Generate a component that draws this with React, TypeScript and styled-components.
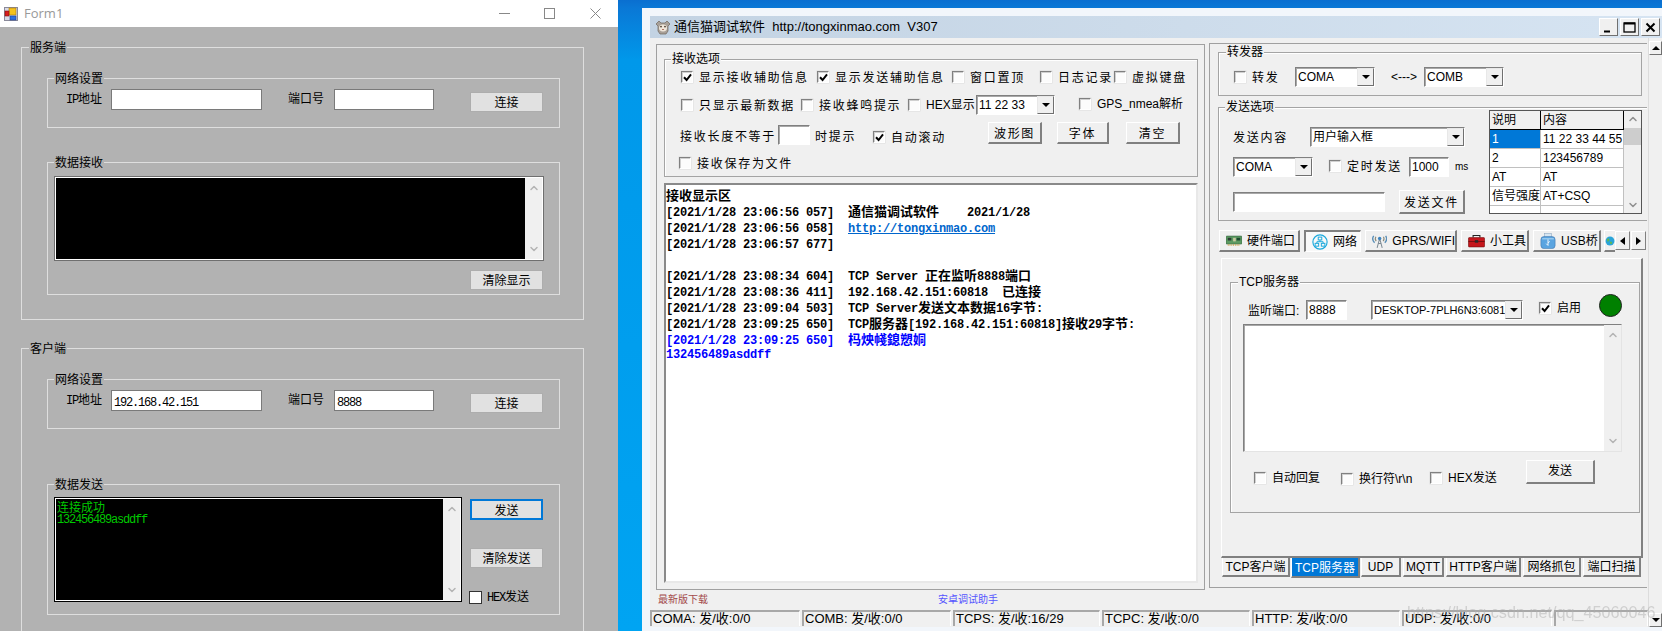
import React from "react"
import styled, { createGlobalStyle, css } from "styled-components"
import { ChevronUp, ChevronDown } from "lucide-react"

const GlobalStyle = createGlobalStyle`
  html, body { margin: 0; padding: 0; background: #0a86dc; }
  * { box-sizing: border-box; }
`

const SANS = `"Liberation Sans", "Noto Sans CJK SC", sans-serif`
const SONG = `"Noto Sans CJK SC", "Liberation Sans", sans-serif`

const Desktop = styled.div`
  position: relative;
  display: flex;
  width: 1662px;
  height: 631px;
  overflow: hidden;
  background: linear-gradient(180deg, #0a6fd0 0, #0a78d6 8px, #0098ea 60px, #00a4f2 100%);
`

/* ---------- left window (WinForms) ---------- */

const FormWindow = styled.div`
  flex: none;
  display: flex;
  flex-direction: column;
  width: 618px;
  height: 631px;
  font: 12px/16px ${SONG};
  color: #000;
`

const FormTitle = styled.div`
  flex: none;
  display: flex;
  align-items: center;
  height: 27px;
  padding-left: 4px;
  background: #fff;
  color: #999;
  font: 13px/27px "Open Sans", sans-serif;
`

const FormTitleText = styled.span`
  margin-left: 6px;
  flex: 1;
`

const CaptionButton = styled.div`
  display: flex;
  align-items: center;
  justify-content: center;
  width: 45.5px;
  height: 27px;
`

const FormBody = styled.div`
  flex: 1;
  display: flex;
  flex-direction: column;
  gap: 28px;
  padding: 20px 0 0 21px;
  overflow: hidden;
  background: #b2b2b2;
`

const Group = styled.div<{ $w?: number; $h: number; $mt?: number; $form?: boolean; $open?: boolean }>`
  position: relative;
  flex: none;
  width: ${(p) => (p.$w ? `${p.$w}px` : "auto")};
  height: ${(p) => p.$h}px;
  margin-top: ${(p) => p.$mt ?? 0}px;
  border: 1px solid ${(p) => (p.$form ? "#dedede" : "#a4a4a4")};
  ${(p) => p.$open && "border-right: none;"}
  ${(p) =>
    !p.$form &&
    css`
      box-shadow: inset 1px 1px 0 #fff;
    `}
`

const Legend = styled.span<{ $left: number; $form?: boolean }>`
  position: absolute;
  top: -9px;
  left: ${(p) => p.$left}px;
  padding: 0 1px;
  background: ${(p) => (p.$form ? "#b2b2b2" : "#f0f0f0")};
  font-size: 12px;
  line-height: 16px;
  white-space: nowrap;
`

const OuterStack = styled.div<{ $gap: number; $top: number }>`
  display: flex;
  flex-direction: column;
  gap: ${(p) => p.$gap}px;
  padding: ${(p) => p.$top}px 23px 0 25px;
`

const FormRow = styled.div`
  display: flex;
  align-items: flex-start;
  padding: 10px 0 0 18px;
`

const FormLabel = styled.span<{ $w: number; $ml?: number }>`
  width: ${(p) => p.$w}px;
  margin-left: ${(p) => p.$ml ?? 0}px;
  line-height: 18px;
  white-space: nowrap;
`

const FormInput = styled.div<{ $w: number }>`
  width: ${(p) => p.$w}px;
  height: 21px;
  padding: 2px 2px;
  border: 1px solid #7a7a7a;
  background: #fff;
  line-height: 16px;
`

const FormButton = styled.div<{ $focus?: boolean; $h?: number }>`
  flex: none;
  width: 73px;
  height: ${(p) => p.$h ?? 20}px;
  border: ${(p) => (p.$focus ? "2px solid #0078d7" : "1px solid #adadad")};
  background: #e1e1e1;
  text-align: center;
  line-height: ${(p) => (p.$h ?? 20) - (p.$focus ? 4 : 2)}px;
`

const ConnectSlot = styled.div`
  margin: 3px 0 0 36px;
`

const Console = styled.div<{ $w: number; $h: number; $dark?: boolean }>`
  display: flex;
  width: ${(p) => p.$w}px;
  height: ${(p) => p.$h}px;
  padding: 1px;
  border: 1px solid ${(p) => (p.$dark ? "#000" : "#6f6f6f")};
  background: #fff;
`

const ConsoleScreen = styled.div`
  flex: 1;
  padding: 2px 1px;
  background: #000;
  color: #00c800;
`

const ConsoleLine = styled.div`
  height: 11px;
  line-height: 11px;
  white-space: nowrap;
`

const ScrollTrack = styled.div<{ $w?: number; $white?: boolean }>`
  flex: none;
  display: flex;
  flex-direction: column;
  justify-content: space-between;
  align-items: center;
  width: ${(p) => p.$w ?? 17}px;
  padding: 4px 0;
  background: #f0f0f0;
  color: #b4b4b4;
`

const RecvBody = styled.div`
  padding: 13px 0 0 6px;
`

const ClearSlot = styled.div`
  margin: 9px 0 0 416px;
`

const SendBody = styled.div`
  display: flex;
  gap: 8px;
  padding: 12px 0 0 6px;
`

const SendColumn = styled.div`
  display: flex;
  flex-direction: column;
  padding-top: 2px;
`

const SendSpacer = styled.div<{ $h: number }>`
  height: ${(p) => p.$h}px;
`

const HexCheck = styled.div`
  display: flex;
  align-items: center;
  gap: 5px;
  margin-left: -1px;
`

const HexBox = styled.span`
  width: 13px;
  height: 13px;
  border: 1px solid #333;
  background: #fff;
`

const Ascii = styled.span`
  font-family: "Liberation Mono", monospace;
  font-size: 12px;
  letter-spacing: -1.2px;
`

const splitAscii = (s: string) => s.split(/([\x00-\x7f]+)/).filter(Boolean)

const Song = ({ text }: { text: string }) => (
  <>
    {splitAscii(text).map((part, i) =>
      /^[\x00-\x7f]/.test(part) ? <Ascii key={i}>{part}</Ascii> : <span key={i}>{part}</span>,
    )}
  </>
)

/* ---------- right window (tongxinmao) ---------- */

const ToolWindow = styled.div`
  flex: none;
  display: flex;
  flex-direction: column;
  width: 1020px;
  height: 623px;
  margin: 8px 0 0 24px;
  padding: 8px 0 4px 8px;
  background: #f2f6fb;
  font: 12px/16px ${SANS};
  color: #000;
`

const ToolTitle = styled.div`
  flex: none;
  display: flex;
  align-items: center;
  height: 22px;
  padding: 0 2px 0 5px;
  background: linear-gradient(90deg, #c3d3e3, #d6e4f2);
  font-size: 13px;
`

const ToolTitleText = styled.span`
  flex: 1;
  margin-left: 3px;
  white-space: pre;
`

const TitleButtons = styled.div`
  display: flex;
  gap: 2px;
`

const TitleButton = styled.div`
  display: flex;
  align-items: center;
  justify-content: center;
  width: 19px;
  height: 18px;
  background: #f0f0f0;
  border: 1px solid;
  border-color: #fff #707070 #707070 #fff;
`

const ToolClient = styled.div`
  flex: 1;
  display: flex;
  min-height: 0;
  background: #f0f0f0;
`

const ToolColumn = styled.div`
  flex: 1;
  display: flex;
  flex-direction: column;
  padding-top: 5px;
  min-width: 0;
`

const PanelRow = styled.div`
  flex: none;
  display: flex;
  align-items: flex-start;
  gap: 4px;
  height: 547px;
  padding-left: 6px;
`

const LeftPanel = styled.div`
  flex: none;
  width: 549px;
  height: 546px;
  margin-top: 1px;
  padding: 14px 0 0 7px;
  border: 1px solid #a0a0a0;
`

const RightPanel = styled.div`
  flex: none;
  width: 438px;
  height: 545px;
  padding: 8px 0 0 8px;
  border: 1px solid #a0a0a0;
  border-right: none;
  overflow: hidden;
`

const OptionRow = styled.div<{ $pl: number; $mt: number; $h: number; $end?: boolean }>`
  display: flex;
  align-items: ${(p) => (p.$end ? "flex-end" : "center")};
  height: ${(p) => p.$h}px;
  margin-top: ${(p) => p.$mt}px;
  padding-left: ${(p) => p.$pl}px;
  white-space: nowrap;
`

const CheckWrap = styled.label<{ $w?: number }>`
  flex: none;
  display: inline-flex;
  align-items: center;
  gap: 6px;
  width: ${(p) => (p.$w ? `${p.$w}px` : "auto")};
  white-space: nowrap;
`

const CheckBox = styled.span`
  flex: none;
  display: flex;
  align-items: center;
  justify-content: center;
  width: 12px;
  height: 12px;
  border: 1px solid;
  border-color: #808080 #fff #fff #808080;
  box-shadow: inset 1px 1px 0 #d0d0d0, 0 0 0 0.5px #dcdcdc;
  background: #fcfcfc;
`

const Spaced = styled.span`
  letter-spacing: 1.72px;
  font-family: ${SONG};
`

const PlainText = styled.span<{ $w?: number; $ml?: number }>`
  flex: none;
  width: ${(p) => (p.$w ? `${p.$w}px` : "auto")};
  margin-left: ${(p) => p.$ml ?? 0}px;
`

const Unit = styled.span`
  flex: none;
  margin-left: 6px;
  font-size: 10px;
`

const Sunken = styled.div<{ $w: number; $h?: number; $ml?: number }>`
  flex: none;
  display: flex;
  align-items: center;
  width: ${(p) => p.$w}px;
  height: ${(p) => p.$h ?? 20}px;
  margin-left: ${(p) => p.$ml ?? 0}px;
  padding-left: 2px;
  border: 1px solid;
  border-color: #808080 #fff #fff #808080;
  box-shadow: inset 1px 1px 0 #a8a8a8;
  background: #fff;
  overflow: hidden;
  white-space: nowrap;
`

const ComboText = styled.span<{ $small?: boolean }>`
  flex: 1;
  overflow: hidden;
  font-size: ${(p) => (p.$small ? 11 : 12)}px;
`

const ComboArrow = styled.span`
  flex: none;
  display: flex;
  align-items: center;
  justify-content: center;
  width: 17px;
  height: 100%;
  background: #f0f0f0;
  border: 1px solid;
  border-color: #e8e8e8 #707070 #707070 #e8e8e8;
  &::after {
    content: "";
    border-style: solid;
    border-width: 4px 4px 0;
    border-color: #000 transparent transparent;
  }
`

const BevelButton = styled.div<{ $w: number; $h: number; $ml?: number; $top?: boolean }>`
  flex: none;
  ${(p) => p.$top && "align-self: flex-start;"}
  width: ${(p) => p.$w}px;
  height: ${(p) => p.$h}px;
  margin-left: ${(p) => p.$ml ?? 0}px;
  border-style: solid;
  border-width: 1px 2px 2px 1px;
  border-color: #fff #808080 #808080 #fff;
  background: #f0f0f0;
  text-align: center;
  line-height: ${(p) => p.$h - 3}px;
`

const LogBox = styled.div`
  width: 534px;
  height: 400px;
  margin-top: 6px;
  padding: 2px 0 0 0;
  border: 2px solid;
  border-color: #8a8a8a #e8e8e8 #e8e8e8 #8a8a8a;
  background: #fff;
  font: bold 13px/16px ${SONG};
`

const LogLine = styled.div<{ $tone?: "blue" }>`
  display: flex;
  height: 16px;
  color: ${(p) => (p.$tone === "blue" ? "#0000ff" : "#000")};
  white-space: pre;
`

const LogStamp = styled.span`
  flex: none;
  width: 182px;
`

const LogAscii = styled.span`
  font-family: "Liberation Mono", monospace;
  font-size: 12px;
  letter-spacing: -0.2px;
`

const LogLink = styled.span`
  color: #0066cc;
  text-decoration: underline;
`

const MixedLog = ({ text }: { text: string }) => (
  <>
    {splitAscii(text).map((part, i) =>
      /^[\x00-\x7f]/.test(part) ? <LogAscii key={i}>{part}</LogAscii> : <span key={i}>{part}</span>,
    )}
  </>
)

const SendOptions = styled.div`
  display: flex;
  padding: 2px 0 0 14px;
`

const SendLeft = styled.div`
  flex: none;
  width: 256px;
  padding-top: 17px;
`

const SendLine = styled.div<{ $mt?: number }>`
  display: flex;
  align-items: center;
  margin-top: ${(p) => p.$mt ?? 0}px;
`

const PresetTable = styled.div`
  flex: none;
  display: flex;
  width: 153px;
  height: 104px;
  border: 1px solid #555;
  background: #fff;
  overflow: hidden;
`

const PresetGrid = styled.div`
  flex: 1;
  display: grid;
  grid-template-columns: 51px 83px;
  grid-auto-rows: 19px;
  align-content: start;
`

const PresetCell = styled.div<{ $head?: boolean; $on?: boolean }>`
  padding: 1px 0 0 2px;
  white-space: nowrap;
  overflow: hidden;
  line-height: 17px;
  border-right: 1px solid ${(p) => (p.$head ? "#000" : "#c0c0c0")};
  border-bottom: 1px solid ${(p) => (p.$head ? "#000" : "#c0c0c0")};
  background: ${(p) => (p.$on ? "#0078d7" : p.$head ? "#f0f0f0" : "#fff")};
  color: ${(p) => (p.$on ? "#fff" : "#000")};
`

const PresetScroll = styled.div`
  position: relative;
  flex: none;
  display: flex;
  flex-direction: column;
  justify-content: space-between;
  align-items: center;
  width: 17px;
  padding: 2px 0;
  background: #f0f0f0;
  color: #909090;
`

const PresetThumb = styled.div`
  position: absolute;
  top: 17px;
  left: 0;
  width: 17px;
  height: 17px;
  background: #cdcdcd;
`

const TabStrip = styled.div`
  display: flex;
  gap: 4px;
  height: 22px;
  margin: 9px 0 0 1px;
`

const IconTab = styled.div<{ $w: number; $on?: boolean }>`
  flex: none;
  display: flex;
  align-items: center;
  gap: 5px;
  width: ${(p) => p.$w}px;
  height: 22px;
  padding-left: 6px;
  border-style: solid;
  border-width: ${(p) => (p.$on ? "2px 1px 1px 2px" : "1px 2px 2px 1px")};
  border-color: ${(p) =>
    p.$on ? "#808080 #fff #fff #808080" : "#fff #808080 #808080 #fff"};
  background: ${(p) => (p.$on ? "#f8f8f8" : "#f0f0f0")};
  white-space: nowrap;
  overflow: hidden;
`

const TabCut = styled.div`
  flex: none;
  display: flex;
  align-items: center;
  width: 11px;
  height: 22px;
  margin-left: -1px;
  overflow: hidden;
  border-top: 1px solid #fff;
  border-left: 1px solid #fff;
  border-bottom: 2px solid #808080;
`

const TabArrows = styled.div`
  flex: none;
  display: flex;
  gap: 1px;
  margin-left: -4px;
`

const TabArrow = styled.div<{ $dir: "left" | "right" }>`
  display: flex;
  align-items: center;
  justify-content: center;
  width: 15px;
  height: 19px;
  margin-top: 1px;
  border: 1px solid;
  border-color: #fff #808080 #808080 #fff;
  background: #f0f0f0;
  &::after {
    content: "";
    border-style: solid;
    border-width: ${(p) => (p.$dir === "left" ? "4px 5px 4px 0" : "4px 0 4px 5px")};
    border-color: ${(p) =>
      p.$dir === "left"
        ? "transparent #000 transparent transparent"
        : "transparent transparent transparent #000"};
  }
`

const TabPage = styled.div`
  width: 422px;
  height: 300px;
  margin: 6px 0 0 3px;
  padding: 23px 0 0 8px;
  border-style: solid;
  border-width: 1px 2px 2px 1px;
  border-color: #fff #808080 #808080 #fff;
`

const ServerTop = styled.div`
  display: flex;
  align-items: flex-start;
  height: 20px;
  margin-top: 17px;
  padding-left: 17px;
`

const TopLabel = styled.span`
  flex: none;
  width: 58px;
  line-height: 22px;
`

const Led = styled.span`
  flex: none;
  width: 23px;
  height: 23px;
  margin-top: -6px;
  border: 1px solid #222;
  border-radius: 50%;
  background: #008000;
`

const ServerLog = styled.div`
  display: flex;
  justify-content: flex-end;
  width: 379px;
  height: 128px;
  margin: 4px 0 0 12px;
  border: 1px solid;
  border-color: #808080 #e4e4e4 #e4e4e4 #808080;
  box-shadow: inset 1px 1px 0 #a8a8a8;
  background: #fff;
`

const ServerActions = styled.div`
  display: flex;
  align-items: flex-start;
  margin-top: 8px;
  padding-left: 23px;
`

const CheckDrop = styled.div<{ $top: number }>`
  padding-top: ${(p) => p.$top}px;
`

const BottomTabs = styled.div`
  display: flex;
  align-items: flex-start;
  margin-left: 4px;
  gap: 1px;
`

const BottomTab = styled.div<{ $w: number; $ml?: number; $on?: boolean }>`
  flex: none;
  width: ${(p) => p.$w}px;
  height: ${(p) => (p.$on ? 20 : 19)}px;
  margin-left: ${(p) => p.$ml ?? 0}px;
  border-style: solid;
  border-width: 0 2px 2px 1px;
  border-color: #fff #808080 #808080 #fff;
  background: ${(p) => (p.$on ? "#0078d7" : "#f0f0f0")};
  color: ${(p) => (p.$on ? "#fff" : "#000")};
  text-align: center;
  line-height: ${(p) => (p.$on ? 20 : 18)}px;
  white-space: nowrap;
  overflow: hidden;
`

const LinkRow = styled.div`
  flex: none;
  display: flex;
  height: 20px;
  padding: 2px 0 0 8px;
  font: 10px/14px ${SONG};
`

const DownloadLink = styled.span`
  width: 280px;
  color: #a34a4a;
`

const AndroidLink = styled.span`
  color: #5555ff;
`

const StatusBar = styled.div`
  flex: none;
  display: flex;
  gap: 2px;
  height: 16px;
`

const StatusCell = styled.div<{ $w?: number }>`
  flex: ${(p) => (p.$w ? "none" : "1")};
  width: ${(p) => (p.$w ? `${p.$w}px` : "auto")};
  padding-left: 1px;
  border-style: solid;
  border-width: 2px 1px 0 2px;
  border-color: #a8a8a8 #fff #fff #a8a8a8;
  font-size: 13px;
  line-height: 14px;
  white-space: nowrap;
  overflow: hidden;
`

const SideScroll = styled.div`
  flex: none;
  display: flex;
  flex-direction: column;
  justify-content: space-between;
  width: 14px;
  padding-top: 3px;
  border-left: 1px solid #dcdcdc;
`

const SideArrow = styled.div<{ $up?: boolean }>`
  display: flex;
  align-items: center;
  justify-content: center;
  height: 14px;
  border: 1px solid;
  border-color: #fff #707070 #707070 #fff;
  background: #f0f0f0;
  &::after {
    content: "";
    border-style: solid;
    border-width: ${(p) => (p.$up ? "0 4px 4px" : "4px 4px 0")};
    border-color: ${(p) =>
      p.$up ? "transparent transparent #000" : "#000 transparent transparent"};
  }
`

const Watermark = styled.div`
  position: absolute;
  left: 1407px;
  top: 602px;
  font: 16.2px/20px ${SANS};
  color: rgba(175, 175, 175, 0.5);
  filter: blur(0.4px);
  white-space: nowrap;
  pointer-events: none;
`

/* ---------- drawings ---------- */

const FormIcon = () => (
  <svg width="14" height="14" viewBox="0 0 14 14">
    <rect x="0.5" y="0.5" width="13" height="13" fill="#d8d8e4" stroke="#8a8a9a" />
    <rect x="5" y="1" width="7" height="7" fill="#f6c21c" stroke="#a87810" strokeWidth="0.6" />
    <rect x="1" y="4" width="4" height="5" fill="#d81c1c" stroke="#801010" strokeWidth="0.6" />
    <rect x="6" y="9" width="6" height="4" fill="#2f6fe0" stroke="#1b3f90" strokeWidth="0.6" />
  </svg>
)

const CatIcon = () => (
  <svg width="16" height="16" viewBox="0 0 16 16">
    <path d="M1 5l3-3 2 2h4l2-2 3 3-2 2v5l-2 3H5l-2-3V7z" fill="#a8a098" stroke="#6f645a" strokeWidth="0.7" />
    <ellipse cx="8" cy="9" rx="4" ry="3.4" fill="#efe6da" />
    <circle cx="6" cy="7.6" r="0.9" fill="#4a3a2c" />
    <circle cx="10" cy="7.6" r="0.9" fill="#4a3a2c" />
    <path d="M7 10.5h2" stroke="#a86a5a" strokeWidth="0.9" />
  </svg>
)

const CardIcon = () => (
  <svg width="16" height="13" viewBox="0 0 18 14">
    <rect x="0" y="2" width="18" height="9" rx="1" fill="#5c9a62" stroke="#2f5c3c" strokeWidth="0.6" />
    <rect x="2" y="4" width="4" height="3" fill="#2d3c34" />
    <rect x="8" y="4" width="3" height="4" fill="#c8c8a0" />
    <rect x="12" y="4" width="4" height="3" fill="#1e4a30" />
    <path d="M2 12h13" stroke="#c8a040" strokeWidth="1.6" strokeDasharray="1 1" />
  </svg>
)

const NetworkIcon = () => (
  <svg width="16" height="16" viewBox="0 0 18 18" fill="none" stroke="#1ba9dc" strokeWidth="1.1">
    <circle cx="9" cy="9" r="8" strokeWidth="1.3" />
    <rect x="7" y="3.5" width="4" height="3.2" />
    <rect x="3.5" y="10.5" width="4" height="3.2" />
    <rect x="10.5" y="10.5" width="4" height="3.2" />
    <path d="M9 6.7v2H5.5v1.8M9 8.7h3.5v1.8" />
  </svg>
)

const TowerIcon = () => (
  <svg width="16" height="16" viewBox="0 0 18 18" fill="none">
    <path d="M2 3c-2 3-1 6 1 8M16 3c2 3 1 6-1 8" stroke="#5a8fb8" strokeWidth="1.6" />
    <path d="M4.5 4c-1 2-.6 4 .5 5M13.5 4c1 2 .6 4-.5 5" stroke="#8a8a78" strokeWidth="1.3" />
    <path d="M9 6l-3 11M9 6l3 11M7 12h4" stroke="#7c8a94" strokeWidth="1.2" />
    <circle cx="9" cy="6" r="2" fill="#3f86c0" />
  </svg>
)

const ToolboxIcon = () => (
  <svg width="17" height="14" viewBox="0 0 20 16">
    <path d="M6 4V1.5h8V4" fill="none" stroke="#222" strokeWidth="1.3" />
    <rect x="0.5" y="4" width="19" height="11" rx="1" fill="#c5161c" stroke="#6c0e10" strokeWidth="0.7" />
    <rect x="0.5" y="8" width="19" height="1.2" fill="#7c0e10" />
    <rect x="8" y="7" width="4" height="3" fill="#2a2a2a" />
  </svg>
)

const UsbIcon = () => (
  <svg width="16" height="16" viewBox="0 0 18 18">
    <rect x="5" y="0.5" width="8" height="5" fill="#d6e6f2" stroke="#8aa4bc" strokeWidth="0.6" />
    <rect x="1" y="4" width="16" height="13.5" rx="3.5" fill="#5aa4e0" stroke="#3a6fa8" strokeWidth="0.6" />
    <path d="M9 7v7M9 14l-2-2M9 11l2-1.5" stroke="#fff" strokeWidth="1" fill="none" />
    <path d="M2.5 6.5h13" stroke="#a4d0f0" strokeWidth="1.4" />
  </svg>
)

const GlobeIcon = () => (
  <svg width="18" height="18" viewBox="0 0 18 18">
    <circle cx="9" cy="9" r="8" fill="#2aa4d8" />
    <path d="M3 6l4-2 1 4-3 3zM9 10l4 1-1 4-3-1z" fill="#5cb85c" />
  </svg>
)

const Tick = () => (
  <svg width="9" height="9" viewBox="0 0 9 9">
    <path d="M1 4.2l2.6 2.8L8 1.4" fill="none" stroke="#000" strokeWidth="2" />
  </svg>
)

/* ---------- small composites ---------- */

const Check = ({ label, w, on, spaced }: { label: React.ReactNode; w?: number; on?: boolean; spaced?: boolean }) => (
  <CheckWrap $w={w}>
    <CheckBox>{on && <Tick />}</CheckBox>
    {spaced ? <Spaced>{label}</Spaced> : <span>{label}</span>}
  </CheckWrap>
)

const Combo = ({ w, text, ml, small }: { w: number; text: string; ml?: number; small?: boolean }) => (
  <Sunken $w={w} $ml={ml}>
    <ComboText $small={small}>{text}</ComboText>
    <ComboArrow />
  </Sunken>
)

const logRows: { stamp: string; text?: string; link?: string; tone?: "blue" }[] = [
  { stamp: "[2021/1/28 23:06:56 057]", text: "通信猫调试软件    2021/1/28" },
  { stamp: "[2021/1/28 23:06:56 058]", link: "http://tongxinmao.com" },
  { stamp: "[2021/1/28 23:06:57 677]" },
  { stamp: "" },
  { stamp: "[2021/1/28 23:08:34 604]", text: "TCP Server 正在监听8888端口" },
  { stamp: "[2021/1/28 23:08:36 411]", text: "192.168.42.151:60818  已连接" },
  { stamp: "[2021/1/28 23:09:04 503]", text: "TCP Server发送文本数据16字节:" },
  { stamp: "[2021/1/28 23:09:25 650]", text: "TCP服务器[192.168.42.151:60818]接收29字节:" },
  { stamp: "[2021/1/28 23:09:25 650]", text: "杩炴帴鎴愬姛", tone: "blue" },
]

const presets = [
  ["1", "11 22 33 44 55"],
  ["2", "123456789"],
  ["AT", "AT"],
  ["信号强度", "AT+CSQ"],
  ["", ""],
]

const statusCells: { text: string; w?: number }[] = [
  { text: "COMA: 发/收:0/0", w: 150 },
  { text: "COMB: 发/收:0/0", w: 149 },
  { text: "TCPS: 发/收:16/29", w: 147 },
  { text: "TCPC: 发/收:0/0", w: 148 },
  { text: "HTTP: 发/收:0/0", w: 148 },
  { text: "UDP: 发/收:0/0", w: 150 },
  { text: "" },
]

const bottomTabs = [
  { text: "TCP客户端", w: 68 },
  { text: "TCP服务器", w: 69, on: true },
  { text: "UDP", w: 40 },
  { text: "MQTT", w: 41, ml: 1 },
  { text: "HTTP客户端", w: 75, ml: 1 },
  { text: "网络抓包", w: 58, ml: 1 },
  { text: "端口扫描", w: 58, ml: 1 },
]

const NetSettings = ({ ip, port }: { ip: string; port: string }) => (
  <Group $form $h={50}>
    <Legend $form $left={6}>网络设置</Legend>
    <FormRow>
      <FormLabel $w={45}><Song text="IP地址" /></FormLabel>
      <FormInput $w={151}><Song text={ip} /></FormInput>
      <FormLabel $w={46} $ml={26}>端口号</FormLabel>
      <FormInput $w={100}><Song text={port} /></FormInput>
      <ConnectSlot><FormButton>连接</FormButton></ConnectSlot>
    </FormRow>
  </Group>
)

export default function App() {
  return (
    <Desktop>
      <GlobalStyle />

      <FormWindow>
        <FormTitle>
          <FormIcon />
          <FormTitleText>Form1</FormTitleText>
          <CaptionButton>
            <svg width="11" height="11" viewBox="0 0 11 11"><path d="M0 5.5h11" stroke="#888" /></svg>
          </CaptionButton>
          <CaptionButton>
            <svg width="11" height="11" viewBox="0 0 11 11"><rect x="0.5" y="0.5" width="10" height="10" fill="none" stroke="#888" /></svg>
          </CaptionButton>
          <CaptionButton>
            <svg width="11" height="11" viewBox="0 0 11 11"><path d="M0.5 0.5l10 10M10.5 0.5l-10 10" stroke="#888" /></svg>
          </CaptionButton>
        </FormTitle>
        <FormBody>
          <Group $form $w={563} $h={273}>
            <Legend $form $left={7}>服务端</Legend>
            <OuterStack $gap={34} $top={30}>
              <NetSettings ip="" port="" />
              <Group $form $h={133}>
                <Legend $form $left={6}>数据接收</Legend>
                <RecvBody>
                  <Console $w={490} $h={85}>
                    <ConsoleScreen />
                    <ScrollTrack>
                      <ChevronUp size={12} strokeWidth={3} />
                      <ChevronDown size={12} strokeWidth={3} />
                    </ScrollTrack>
                  </Console>
                  <ClearSlot><FormButton>清除显示</FormButton></ClearSlot>
                </RecvBody>
              </Group>
            </OuterStack>
          </Group>

          <Group $form $w={563} $h={300}>
            <Legend $form $left={7}>客户端</Legend>
            <OuterStack $gap={55} $top={30}>
              <NetSettings ip="192.168.42.151" port="8888" />
              <Group $form $h={131}>
                <Legend $form $left={6}>数据发送</Legend>
                <SendBody>
                  <Console $w={408} $h={105} $dark>
                    <ConsoleScreen>
                      <ConsoleLine>连接成功</ConsoleLine>
                      <ConsoleLine><Song text="132456489asddff" /></ConsoleLine>
                    </ConsoleScreen>
                    <ScrollTrack>
                      <ChevronUp size={12} strokeWidth={3} />
                      <ChevronDown size={12} strokeWidth={3} />
                    </ScrollTrack>
                  </Console>
                  <SendColumn>
                    <FormButton $focus $h={21}>发送</FormButton>
                    <SendSpacer $h={28} />
                    <FormButton>清除发送</FormButton>
                    <SendSpacer $h={20} />
                    <HexCheck>
                      <HexBox />
                      <span><Song text="HEX发送" /></span>
                    </HexCheck>
                  </SendColumn>
                </SendBody>
              </Group>
            </OuterStack>
          </Group>
        </FormBody>
      </FormWindow>

      <ToolWindow>
        <ToolTitle>
          <CatIcon />
          <ToolTitleText>通信猫调试软件  http://tongxinmao.com  V307</ToolTitleText>
          <TitleButtons>
            <TitleButton>
              <svg width="11" height="11" viewBox="0 0 11 11"><path d="M1 9.5h6" stroke="#000" strokeWidth="2" /></svg>
            </TitleButton>
            <TitleButton>
              <svg width="13" height="11" viewBox="0 0 13 11"><rect x="1" y="1" width="11" height="9" fill="none" stroke="#000" strokeWidth="1.3" /><path d="M1 1.5h11" stroke="#000" strokeWidth="2" /></svg>
            </TitleButton>
            <TitleButton>
              <svg width="11" height="11" viewBox="0 0 11 11"><path d="M1.5 1.5l8 8M9.5 1.5l-8 8" stroke="#000" strokeWidth="2" /></svg>
            </TitleButton>
          </TitleButtons>
        </ToolTitle>

        <ToolClient>
          <ToolColumn>
            <PanelRow>
              <LeftPanel>
                <Group $w={534} $h={118}>
                  <Legend $left={6}>接收选项</Legend>
                  <OptionRow $pl={16} $mt={8} $h={18}>
                    <Check spaced on w={136} label="显示接收辅助信息" />
                    <Check spaced on w={135} label="显示发送辅助信息" />
                    <Check spaced w={88} label="窗口置顶" />
                    <Check spaced w={74} label="日志记录" />
                    <Check spaced label="虚拟键盘" />
                  </OptionRow>
                  <OptionRow $pl={16} $mt={9} $h={20}>
                    <Check spaced w={120} label="只显示最新数据" />
                    <Check spaced w={107} label="接收蜂鸣提示" />
                    <Check w={68} label="HEX显示" />
                    <Combo w={79} text="11 22 33" />
                    <PlainText $ml={24}><Check label="GPS_nmea解析" /></PlainText>
                  </OptionRow>
                  <OptionRow $pl={15} $mt={7} $h={23} $end>
                    <PlainText $w={98}><Spaced>接收长度不等于</Spaced></PlainText>
                    <Sunken $w={32} />
                    <PlainText $w={58} $ml={5}><Spaced>时提示</Spaced></PlainText>
                    <Check spaced on w={115} label="自动滚动" />
                    <BevelButton $top $w={54} $h={22}><Spaced>波形图</Spaced></BevelButton>
                    <BevelButton $top $w={52} $h={22} $ml={15}><Spaced>字体</Spaced></BevelButton>
                    <BevelButton $top $w={54} $h={22} $ml={17}><Spaced>清空</Spaced></BevelButton>
                  </OptionRow>
                  <OptionRow $pl={14} $mt={9} $h={18}>
                    <Check spaced label="接收保存为文件" />
                  </OptionRow>
                </Group>
                <LogBox>
                  <LogLine>接收显示区</LogLine>
                  {logRows.map((row, i) => (
                    <LogLine key={i} $tone={row.tone}>
                      <LogStamp><LogAscii>{row.stamp}</LogAscii></LogStamp>
                      {row.text && <span><MixedLog text={row.text} /></span>}
                      {row.link && <LogLink><LogAscii>{row.link}</LogAscii></LogLink>}
                    </LogLine>
                  ))}
                  <LogLine $tone="blue"><LogAscii>132456489asddff</LogAscii></LogLine>
                </LogBox>
              </LeftPanel>

              <RightPanel>
                <Group $w={424} $h={44}>
                  <Legend $left={7}>转发器</Legend>
                  <OptionRow $pl={15} $mt={14} $h={20}>
                    <Check spaced w={61} label="转发" />
                    <Combo w={80} text="COMA" />
                    <PlainText $w={33} $ml={16}>&lt;---&gt;</PlainText>
                    <Combo w={80} text="COMB" />
                  </OptionRow>
                </Group>
                <Group $open $w={430} $h={114} $mt={11}>
                  <Legend $left={6}>发送选项</Legend>
                  <SendOptions>
                    <SendLeft>
                      <SendLine>
                        <PlainText $w={77}><Spaced>发送内容</Spaced></PlainText>
                        <Combo w={155} text="用户输入框" />
                      </SendLine>
                      <SendLine $mt={10}>
                        <Combo w={80} text="COMA" />
                        <PlainText $ml={16}><Check spaced w={80} label="定时发送" /></PlainText>
                        <Sunken $w={40}>1000</Sunken>
                        <Unit>ms</Unit>
                      </SendLine>
                      <SendLine $mt={13}>
                        <Sunken $w={152} />
                        <BevelButton $w={66} $h={24} $ml={14}><Spaced>发送文件</Spaced></BevelButton>
                      </SendLine>
                    </SendLeft>
                    <PresetTable>
                      <PresetGrid>
                        <PresetCell $head>说明</PresetCell>
                        <PresetCell $head>内容</PresetCell>
                        {presets.map(([name, value], i) => (
                          <React.Fragment key={i}>
                            <PresetCell $on={i === 0}>{name}</PresetCell>
                            <PresetCell>{value}</PresetCell>
                          </React.Fragment>
                        ))}
                      </PresetGrid>
                      <PresetScroll>
                        <PresetThumb />
                        <ChevronUp size={12} strokeWidth={3} />
                        <ChevronDown size={12} strokeWidth={3} />
                      </PresetScroll>
                    </PresetTable>
                  </SendOptions>
                </Group>

                <TabStrip>
                  <IconTab $w={81}><CardIcon />硬件端口</IconTab>
                  <IconTab $w={57} $on><NetworkIcon />网络</IconTab>
                  <IconTab $w={92}><TowerIcon />GPRS/WIFI</IconTab>
                  <IconTab $w={68}><ToolboxIcon />小工具</IconTab>
                  <IconTab $w={68}><UsbIcon />USB桥</IconTab>
                  <TabCut><GlobeIcon /></TabCut>
                  <TabArrows>
                    <TabArrow $dir="left" />
                    <TabArrow $dir="right" />
                  </TabArrows>
                </TabStrip>

                <TabPage>
                  <Group $w={410} $h={231}>
                    <Legend $left={7}>TCP服务器</Legend>
                    <ServerTop>
                      <TopLabel>监听端口:</TopLabel>
                      <Sunken $w={41}>8888</Sunken>
                      <Combo small w={152} ml={24} text="DESKTOP-7PLH6N3:60818" />
                      <PlainText $w={60} $ml={16}>
                        <Check on label="启用" />
                      </PlainText>
                      <Led />
                    </ServerTop>
                    <ServerLog>
                      <ScrollTrack>
                        <ChevronUp size={12} strokeWidth={3} />
                        <ChevronDown size={12} strokeWidth={3} />
                      </ScrollTrack>
                    </ServerLog>
                    <ServerActions>
                      <CheckDrop $top={10}><Check w={87} label="自动回复" /></CheckDrop>
                      <CheckDrop $top={11}><Check w={89} label="换行符\r\n" /></CheckDrop>
                      <CheckDrop $top={10}><Check w={96} label="HEX发送" /></CheckDrop>
                      <BevelButton $w={69} $h={24}>发送</BevelButton>
                    </ServerActions>
                  </Group>
                </TabPage>

                <BottomTabs>
                  {bottomTabs.map((tab) => (
                    <BottomTab key={tab.text} $w={tab.w} $ml={tab.ml} $on={tab.on}>{tab.text}</BottomTab>
                  ))}
                </BottomTabs>
              </RightPanel>
            </PanelRow>

            <LinkRow>
              <DownloadLink>最新版下载</DownloadLink>
              <AndroidLink>安卓调试助手</AndroidLink>
            </LinkRow>

            <StatusBar>
              {statusCells.map((cell, i) => (
                <StatusCell key={i} $w={cell.w}>{cell.text}</StatusCell>
              ))}
            </StatusBar>
          </ToolColumn>
          <SideScroll>
            <SideArrow $up />
            <SideArrow />
          </SideScroll>
        </ToolClient>
      </ToolWindow>

      <Watermark>https://blog.csdn.net/qq_45060046</Watermark>
    </Desktop>
  )
}
